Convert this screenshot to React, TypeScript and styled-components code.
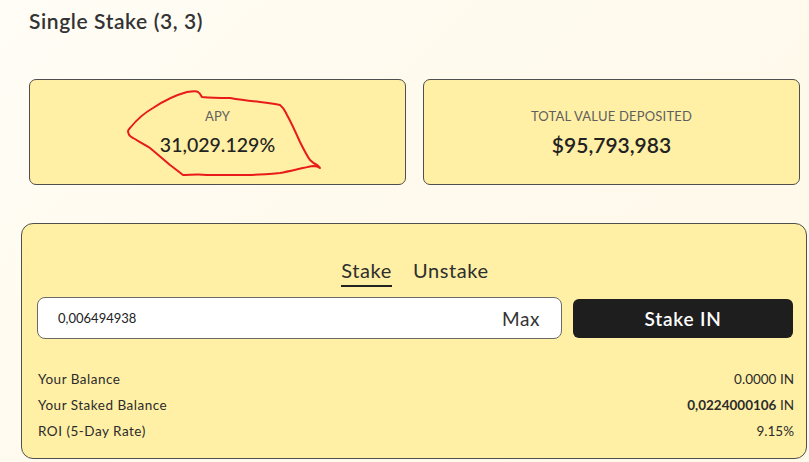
import React from "react";
import styled, { createGlobalStyle } from "styled-components";

const GlobalStyle = createGlobalStyle`
  html, body { margin: 0; padding: 0; }
  body {
    background: #fffaee;
    font-family: "Lato", "Noto Sans", sans-serif;
    color: #2b2b2b;
  }
`;

const Page = styled.div`
  position: relative;
  width: 809px;
  height: 462px;
  box-sizing: border-box;
  padding: 9px 2px 0 21px;
  background: linear-gradient(135deg, #fffdf6 0%, #fffaee 40%, #fff9ea 100%);
  overflow: hidden;
`;

const Title = styled.h1`
  margin: 0 0 0 8px;
  font-size: 21px;
  line-height: 24px;
  font-weight: 600;
  color: #333;
  letter-spacing: 0.6px;
`;

const Cards = styled.div`
  display: grid;
  grid-template-columns: 1fr 1fr;
  gap: 17px;
  margin: 46px 7px 0 8px;
`;

const StatCard = styled.div`
  height: 106px;
  box-sizing: border-box;
  background: #fff0a5;
  border: 1px solid #4f4f4f;
  border-radius: 7px;
  display: flex;
  flex-direction: column;
  align-items: center;
  justify-content: center;
  gap: 8px;
  padding-top: 2px;
`;

const StatLabel = styled.div`
  font-size: 13px;
  line-height: 16px;
  color: #5f5f5f;
  letter-spacing: 0.2px;
  text-transform: uppercase;
`;

const StatValue = styled.div<{ $bold?: boolean; $size: number }>`
  font-size: ${(p) => p.$size}px;
  line-height: 26px;
  font-weight: ${(p) => (p.$bold ? 600 : 500)};
  color: #222;
`;

const Panel = styled.div`
  margin-top: 38px;
  height: 236px;
  box-sizing: border-box;
  background: #fff0a5;
  border: 1px solid #4f4f4f;
  border-radius: 12px;
  padding: 35px 13px 0 15px;
`;

const Tabs = styled.div`
  display: flex;
  justify-content: center;
  gap: 21px;
`;

const Tab = styled.div<{ $active?: boolean }>`
  font-size: 20px;
  line-height: 22px;
  letter-spacing: 0.6px;
  color: #2e2e2e;
  padding-bottom: 4px;
  border-bottom: 2px solid ${(p) => (p.$active ? "#222" : "transparent")};
`;

const ActionRow = styled.div`
  display: flex;
  align-items: center;
  gap: 11px;
  margin-top: 10px;
  height: 42px;
`;

const InputBox = styled.div`
  flex: 0 0 525px;
  height: 42px;
  box-sizing: border-box;
  background: #fff;
  border: 1px solid #6a6a6a;
  border-radius: 8px;
  display: flex;
  align-items: center;
  justify-content: space-between;
  padding: 0 21px 0 20px;
`;

const InputText = styled.span`
  font-size: 13px;
  color: #222;
`;

const MaxText = styled.span`
  font-size: 19px;
  letter-spacing: 0.6px;
  color: #333;
`;

const StakeButton = styled.button`
  flex: 0 0 220px;
  height: 39px;
  border: none;
  border-radius: 6px;
  background: #1e1e1e;
  color: #fff;
  font-family: inherit;
  font-size: 19px;
  letter-spacing: 0.8px;
  font-weight: 600;
`;

const InfoList = styled.div`
  margin: 27px 0 0 0;
  padding: 0 0 0 1px;
  width: 756px;
`;

const InfoRow = styled.div`
  display: flex;
  justify-content: space-between;
  font-size: 13.5px;
  line-height: 26px;
  color: #2b2b2b;
`;

const InfoLabel = styled.span`
  letter-spacing: 0.5px;
`;

const InfoValue = styled.span<{ $bold?: boolean }>`
  font-weight: ${(p) => (p.$bold ? 700 : 400)};
`;

const Scribble = styled.svg`
  position: absolute;
  left: 0;
  top: 0;
  pointer-events: none;
`;

export default function App() {
  return (
    <>
      <GlobalStyle />
      <Page>
        <Title>Single Stake (3, 3)</Title>
        <Cards>
          <StatCard>
            <StatLabel>APY</StatLabel>
            <StatValue $size={19.5}>31,029.129%</StatValue>
          </StatCard>
          <StatCard>
            <StatLabel>Total Value Deposited</StatLabel>
            <StatValue $size={21} $bold>
              $95,793,983
            </StatValue>
          </StatCard>
        </Cards>
        <Panel>
          <Tabs>
            <Tab $active>Stake</Tab>
            <Tab>Unstake</Tab>
          </Tabs>
          <ActionRow>
            <InputBox>
              <InputText>0,006494938</InputText>
              <MaxText>Max</MaxText>
            </InputBox>
            <StakeButton>Stake IN</StakeButton>
          </ActionRow>
          <InfoList>
            <InfoRow>
              <InfoLabel>Your Balance</InfoLabel>
              <InfoValue>0.0000 IN</InfoValue>
            </InfoRow>
            <InfoRow>
              <InfoLabel>Your Staked Balance</InfoLabel>
              <InfoValue>
                <InfoValue $bold>0,0224000106</InfoValue> IN
              </InfoValue>
            </InfoRow>
            <InfoRow>
              <InfoLabel>ROI (5-Day Rate)</InfoLabel>
              <InfoValue>9.15%</InfoValue>
            </InfoRow>
          </InfoList>
        </Panel>
        <Scribble width="809" height="462" viewBox="0 0 809 462">
          <path
            d="M130 128 C138 118 146 112 153 108 C165 100 176 95 187 92 C193 91 197 91 198 92 C201 94 201 96 202 97 C212 98 222 98 230 98 C242 100 251 101 260 102 C268 103 275 104 280 105 C284 108 285 111 287 115 C292 124 296 133 300 142 C304 150 307 156 310 160 C313 163 315 164 317 165 C318 166 320 167 320 168 C318 166 316 166 313 166 C302 168 291 171 280 173 C269 174 258 175 247 175 C234 175 220 175 207 175 C198 174 190 175 183 175 C178 171 174 168 170 165 C163 159 156 153 150 148 C144 144 138 141 133 138 C129 136 128 134 128 131 C128 130 129 129 130 128 Z"
            fill="none"
            stroke="#e81a1a"
            strokeWidth="2"
            strokeLinejoin="round"
          />
        </Scribble>
      </Page>
    </>
  );
}
